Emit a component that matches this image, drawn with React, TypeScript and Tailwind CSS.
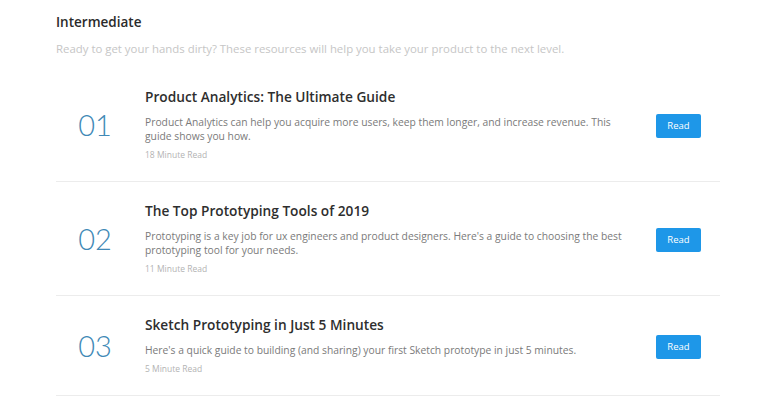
const guides = [
  {
    num: "01",
    title: "Product Analytics: The Ultimate Guide",
    text: "Product Analytics can help you acquire more users, keep them longer, and increase revenue. This guide shows you how.",
    meta: "18 Minute Read"
  },
  {
    num: "02",
    title: "The Top Prototyping Tools of 2019",
    text: "Prototyping is a key job for ux engineers and product designers. Here's a guide to choosing the best prototyping tool for your needs.",
    meta: "11 Minute Read"
  },
  {
    num: "03",
    title: "Sketch Prototyping in Just 5 Minutes",
    text: "Here's a quick guide to building (and sharing) your first Sketch prototype in just 5 minutes.",
    meta: "5 Minute Read"
  }
];

export default function App() {
  return (
    <div className="min-h-[415px] bg-white pl-[56px] pr-[48px] font-['Open_Sans',sans-serif]">
      <h1 className="pt-[13px] text-[13.5px] font-semibold leading-[18px] text-[#2b2b2b]">Intermediate</h1>
      <p className="mt-[10px] text-[11.4px] leading-[16px] text-[#c6c6c6]">
        Ready to get your hands dirty? These resources will help you take your product to the next level.
      </p>

      <div className="mt-[11px]">
        {guides.map((g, i) => (
          <div
            key={g.num}
            className={`flex items-center py-[19px] pr-[19px] ${i > 0 ? "border-t border-[#ececec]" : ""} border-b border-[#ececec] -mb-px`}
          >
            <div className="w-[78px] shrink-0 text-center font-['Lato',sans-serif] text-[29px] font-light leading-none text-[#4189b6]">{g.num}</div>
            <div className="ml-[11px] w-[490px] shrink-0">
              <h2 className="text-[13.7px] font-semibold leading-[20px] text-[#2e2e2e]">{g.title}</h2>
              <p className="mt-[8px] text-[10.3px] leading-[14px] text-[#7a7a7a]">{g.text}</p>
              <p className="mt-[5px] text-[8.5px] leading-[14px] text-[#b3b3b3]">{g.meta}</p>
            </div>
            <div className="ml-auto">
              <button className="h-[24px] w-[45px] rounded-[2px] bg-[#1e97e8] text-[9.5px] text-white">Read</button>
            </div>
          </div>
        ))}
      </div>
    </div>
  );
}
